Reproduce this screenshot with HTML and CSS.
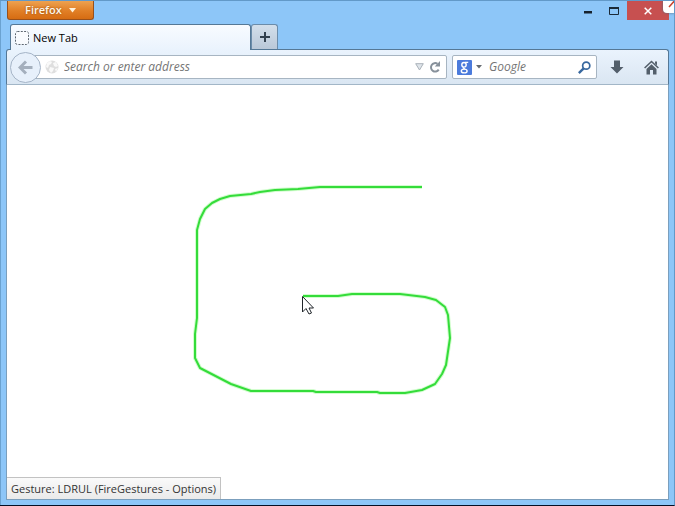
FILE: index.html
```html
<!DOCTYPE html>
<html lang="en">
<head>
<meta charset="utf-8">
<meta name="viewport" content="width=device-width, initial-scale=1">
<title>New Tab</title>
<link rel="stylesheet" href="styles.css">
</head>
<body>
<div class="window">
  <header class="titlebar">
    <button class="app-menu" type="button">Firefox
      <svg width="7" height="5" viewBox="0 0 7 5" aria-hidden="true"><path d="M0 0h7L3.500 4.500z" fill="#fff3dc"/></svg>
    </button>
    <div class="window-controls">
      <button class="control" type="button" aria-label="Minimize">
        <svg width="8" height="3" viewBox="0 0 8 3"><path d="M0 0h8v2.500H0z" fill="#16222e"/></svg>
      </button>
      <button class="control maximize" type="button" aria-label="Maximize">
        <svg width="10" height="8" viewBox="0 0 10 8"><path d="M.5 1h9v6.500h-9z" fill="none" stroke="#1b2a38"/><path d="M0 0h10v2H0z" fill="#1b2a38"/></svg>
      </button>
      <button class="control close" type="button" aria-label="Close">
        <svg width="8" height="8" viewBox="0 0 8 8"><path d="M.7.7l6.600 6.600M7.300.7L.7 7.300" stroke="#fff" stroke-width="1.500"/></svg>
      </button>
    </div>
  </header>
  <div class="corner" aria-hidden="true">
    <svg width="12" height="13" viewBox="0 0 12 13"><path d="M6 7L13-1" stroke="#c8442e" stroke-width="1.500"/><path d="M9 0h3" stroke="#8d2416" stroke-width="1.500"/></svg>
  </div>

  <nav class="tabs" aria-label="Tabs">
    <button class="tab" type="button">
      <svg width="14" height="14" viewBox="0 0 14 14" aria-hidden="true"><rect x=".5" y=".5" width="13" height="13" rx="2" fill="#fff" fill-opacity=".6" stroke="#5d6670" stroke-dasharray="2 1.300"/></svg>
      New Tab
    </button>
    <button class="new-tab" type="button" aria-label="Open a new tab">
      <svg width="10" height="10" viewBox="0 0 10 10"><path d="M5 0v10M0 5h10" stroke="#33414f" stroke-width="2"/></svg>
    </button>
  </nav>

  <div class="toolbar">
    <button class="back" type="button" aria-label="Back">
      <svg width="15" height="15" viewBox="0 0 15 15"><path d="M8 1.500L2 7.500l6 6M2.500 7.500H14.500" fill="none" stroke="#a4afbd" stroke-width="3"/></svg>
    </button>
    <form class="field address">
      <svg width="14" height="14" viewBox="0 0 14 14" aria-hidden="true"><circle cx="7" cy="7" r="6.500" fill="#dedede"/><path d="M2 3l3-2 2 1-1 2-2 1-1 3-2-1zM8 3l3-1 2 4-2 1-2-1zM5 7l4 1-1 3-2 2-2-3zM10 9l3-1-2 4z" fill="#f9f9f9"/></svg>
      <input type="text" aria-label="Address" placeholder="Search or enter address">
      <button type="button" aria-label="Show history">
        <svg width="9" height="8" viewBox="0 0 9 8"><path d="M.7.7h7.600L4.500 7z" fill="#dfe5ea" stroke="#a9b1b9"/></svg>
      </button>
      <button type="button" aria-label="Reload">
        <svg width="12" height="12" viewBox="0 0 12 12"><path d="M8.500 2.800A4.200 4.200 0 1 0 9.700 8.600" fill="none" stroke="#87919b" stroke-width="2"/><path d="M11 0v5.500H5.800z" fill="#87919b"/></svg>
      </button>
    </form>
    <form class="field search">
      <button class="engine" type="button" aria-label="Choose search engine">
        <svg width="15" height="15" viewBox="0 0 15 15"><rect width="15" height="15" rx="1" fill="#4b7bdc"/><ellipse cx="7" cy="4.800" rx="2.200" ry="2.300" fill="none" stroke="#fff" stroke-width="1.400"/><path d="M8 2.300h3.200M6.500 7Q5.500 8.200 8 9" fill="none" stroke="#fff" stroke-width="1.200"/><ellipse cx="7.200" cy="11" rx="2.900" ry="1.900" fill="none" stroke="#fff" stroke-width="1.400"/></svg>
        <svg width="6" height="4" viewBox="0 0 6 4"><path d="M0 0h6L3 3.500z" fill="#666c72"/></svg>
      </button>
      <input type="text" aria-label="Search the web" placeholder="Google">
      <button type="button" aria-label="Search">
        <svg width="13" height="13" viewBox="0 0 12 12"><circle cx="7.600" cy="4.300" r="3.300" fill="none" stroke="#38689f" stroke-width="1.600"/><path d="M5.200 6.800L.8 11.200" stroke="#38689f" stroke-width="2.200"/></svg>
      </button>
    </form>
    <button class="tool" type="button" aria-label="Downloads">
      <svg width="14" height="14" viewBox="0 0 14 14"><path d="M4 .5h6V7h3.500L7 13.500.5 7H4z" fill="#535f6b"/></svg>
    </button>
    <button class="tool" type="button" aria-label="Home">
      <svg width="15" height="15" viewBox="0 0 15 15"><path d="M.6 8L7.500 1.500 14.400 8" fill="none" stroke="#535f6b" stroke-width="1.600"/><path d="M11 1.500h2v4l-2-2zM2.500 9L7.500 4.300 12.500 9v5.500H9V10H6v4.500H2.500z" fill="#535f6b"/></svg>
    </button>
  </div>

  <main class="page">
    <svg class="gesture" width="280" height="230" viewBox="187 177 280 230" role="img" aria-label="Mouse gesture trail">
      <path class="glow" d="M422 187H320L298 189 275 190 260 192 251 194 230 196 220 199 212 203 205 209 200 219 197 230V318L195 334V358L200 368 231 384 251 391H313L316 392H377L380 393H405L422 390 435 384 442 374 446 365 450 338 448 315 445 307 436 300 425 297 400 294H352L338 296H303"/>
      <path class="trail" d="M422 187H320L298 189 275 190 260 192 251 194 230 196 220 199 212 203 205 209 200 219 197 230V318L195 334V358L200 368 231 384 251 391H313L316 392H377L380 393H405L422 390 435 384 442 374 446 365 450 338 448 315 445 307 436 300 425 297 400 294H352L338 296H303"/>
      <path d="M302.500 296.500V312l3.500-3.500 3 5.500 2.500-1-2.500-5h4.500z" fill="#fff" stroke="#20252a"/>
    </svg>
    <div class="status" role="status">Gesture: LDRUL (FireGestures - Options)</div>
  </main>
</div>
</body>
</html>
```
FILE: styles.css
```css
* {
  box-sizing: border-box;
}

body {
  margin: 0;
  font: 11px/16px "Open Sans", "Noto Sans", sans-serif;
  color: #20262c;
}

button,
input {
  margin: 0;
  padding: 0;
  border: 0;
  background: none;
  color: inherit;
  font: inherit;
}

svg {
  display: block;
  flex: none;
}

.window {
  position: relative;
  display: flex;
  flex-direction: column;
  min-height: 100vh;
  padding: 0 5px 5px 6px;
  overflow: hidden;
  background: #8dc6f8;
  border: solid #6299c8;
  border-width: 1px 1px 1px 0;
  border-bottom-color: #050f24;
  box-shadow: inset 1px 0 #6ba2d0;
}

.titlebar {
  display: flex;
  justify-content: space-between;
  height: 23px;
  padding-left: 1px;
}

.app-menu {
  display: flex;
  align-items: center;
  justify-content: center;
  gap: 7px;
  width: 87px;
  height: 19px;
  border: 1px solid #98501c;
  border-top: 0;
  border-radius: 0 0 3px 3px;
  background: linear-gradient(#eda250, #e17f26 55%, #d66c12);
  color: #fff8ea;
  font-weight: 600;
  text-shadow: 0 0 2px #8a430b;
}

.window-controls {
  display: flex;
  align-items: flex-start;
}

.control {
  display: grid;
  place-items: center;
  width: 26px;
  height: 19px;
}

.control:first-child {
  padding-top: 4px;
}

.close {
  width: 42px;
  background: #c75050;
}

.corner {
  position: absolute;
  top: -1px;
  right: -1px;
  border-radius: 0 0 0 4px;
  background: #fff;
  box-shadow: 0 0 3px #536b82;
}

.tabs {
  display: flex;
  height: 25px;
  padding-left: 4px;
}

.tab {
  position: relative;
  z-index: 1;
  display: flex;
  align-items: center;
  gap: 4px;
  width: 241px;
  margin-bottom: -1px;
  padding-left: 4px;
  border: 1px solid #557896;
  border-bottom: 0;
  border-radius: 3px 3px 0 0;
  background: linear-gradient(#f8fbff, #eaf3fd);
  color: #000;
}

.new-tab {
  display: grid;
  place-items: center;
  width: 27px;
  border: 1px solid #6b8caa;
  border-bottom: 0;
  border-radius: 3px 3px 0 0;
  background: linear-gradient(#d3dfeb, #bac8d8);
}

.toolbar {
  display: flex;
  align-items: center;
  height: 36px;
  padding: 0 6px 0 3px;
  border: 1px solid #557896;
  border-bottom-color: #a2b6c7;
  border-radius: 3px 3px 0 0;
  background: linear-gradient(#eaf3fd, #dae6f2);
}

.back {
  z-index: 1;
  display: grid;
  place-items: center;
  flex: none;
  width: 31px;
  height: 31px;
  border: 1px solid #a5b4c7;
  border-radius: 50%;
  background: #e7f0fb;
}

.field {
  display: flex;
  align-items: center;
  min-width: 0;
  height: 24px;
  border: 1px solid #a7b5c2;
  border-radius: 2px;
  background: #fff;
}

.field input {
  flex: 1;
  min-width: 0;
  outline: 0;
  font-size: 12px;
  font-style: italic;
}

.field input::placeholder {
  color: #757575;
  opacity: 1;
}

.address {
  flex: 1;
  gap: 5px;
  margin-left: -8px;
  padding: 0 5px 0 11px;
}

.search {
  width: 145px;
  gap: 7px;
  margin-left: 5px;
  padding: 0 5px 0 4px;
}

.engine {
  display: flex;
  align-items: center;
  gap: 4px;
}

.tool {
  display: grid;
  place-items: center;
  width: 21px;
  height: 24px;
  margin-left: 9px;
}

.tool + .tool {
  margin-left: 14px;
}

.page {
  position: relative;
  display: flex;
  flex: 1;
  align-items: flex-end;
  border: solid #7b9fbd;
  border-width: 0 1px 1px;
  background: #fff;
}

.gesture {
  position: absolute;
  top: 92px;
  left: 180px;
}

.glow,
.trail {
  fill: none;
  stroke-linejoin: round;
}

.glow {
  stroke: #d2fdce;
  stroke-width: 4;
}

.trail {
  stroke: #34dc3a;
  stroke-width: 2;
}

.status {
  padding: 3px 4px 2px;
  border: 1px solid #c2c2c2;
  border-width: 1px 1px 0 0;
  background: linear-gradient(#fafafa, #eaeaea);
  color: #333;
}
```
